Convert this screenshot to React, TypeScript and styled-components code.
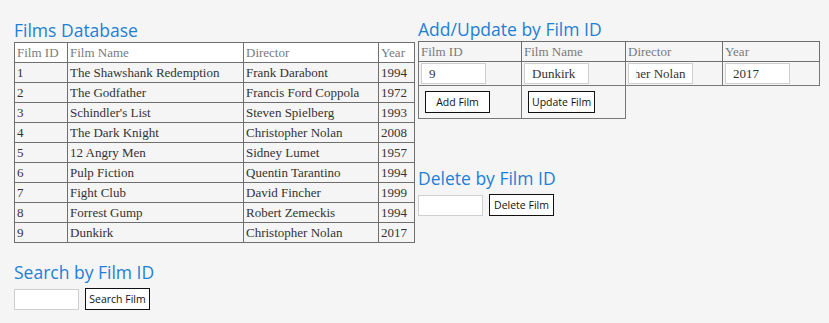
import React, { useEffect, useRef } from "react"
import styled, { createGlobalStyle } from "styled-components"

const Global = createGlobalStyle`
  body {
    margin: 0;
    background: #f5f5f5;
  }
`

const films = [
  { id: 1, name: "The Shawshank Redemption", director: "Frank Darabont", year: 1994 },
  { id: 2, name: "The Godfather", director: "Francis Ford Coppola", year: 1972 },
  { id: 3, name: "Schindler's List", director: "Steven Spielberg", year: 1993 },
  { id: 4, name: "The Dark Knight", director: "Christopher Nolan", year: 2008 },
  { id: 5, name: "12 Angry Men", director: "Sidney Lumet", year: 1957 },
  { id: 6, name: "Pulp Fiction", director: "Quentin Tarantino", year: 1994 },
  { id: 7, name: "Fight Club", director: "David Fincher", year: 1999 },
  { id: 8, name: "Forrest Gump", director: "Robert Zemeckis", year: 1994 },
  { id: 9, name: "Dunkirk", director: "Christopher Nolan", year: 2017 },
]

const S = {
  Page: styled.div`
    display: flex;
    gap: 4px;
    padding: 18px 0 0 14px;
  `,
  Column: styled.div`
    display: flex;
    flex-direction: column;
    width: 400px;
  `,
  Heading: styled.h2<{ $top?: number }>`
    margin: ${(p) => p.$top ?? 0}px 0 0 0;
    font-family: "Open Sans", "Noto Sans", sans-serif;
    font-weight: 400;
    font-size: 17.5px;
    line-height: 24px;
    color: #1e7fd6;
  `,
  Table: styled.table`
    border-collapse: collapse;
    font-family: "Liberation Serif", serif;
    font-size: 13px;
    line-height: 15px;
    color: #333;
    table-layout: fixed;
  `,
  Th: styled.th<{ $white?: boolean }>`
    text-align: left;
    font-weight: 400;
    color: #7a7a7a;
    background: ${(p) => (p.$white ? "#fff" : "transparent")};
    border: 1px solid #6f6f6f;
    padding: 2px 2px;
  `,
  Td: styled.td`
    border: 1px solid #6f6f6f;
    padding: 2px 2px;
    white-space: nowrap;
    overflow: hidden;
  `,
  FormTd: styled.td`
    border: 1px solid #777;
    padding: 1px 2px;
    vertical-align: top;
  `,
  Input: styled.input`
    box-sizing: border-box;
    width: 65px;
    height: 21px;
    border: 1px solid #cfcfcf;
    background: #fff;
    padding: 0 7px;
    font-family: "Liberation Serif", serif;
    font-size: 13px;
    color: #333;
    outline: none;
  `,
  Button: styled.button`
    box-sizing: border-box;
    min-width: 65px;
    height: 22px;
    padding: 0 3px;
    border: 1px solid #111;
    background: #fff;
    font-family: "Open Sans", "Noto Sans", sans-serif;
    font-size: 10.5px;
    color: #111;
  `,
  CellButton: styled.div`
    padding: 4px 2px 4px 4px;
  `,
  InlineForm: styled.div`
    display: flex;
    align-items: center;
    gap: 6px;
    margin-top: 4px;
  `,
}

const ScrolledInput: React.FC<{ value: string }> = ({ value }) => {
  const ref = useRef<HTMLInputElement>(null)
  useEffect(() => {
    if (ref.current) ref.current.scrollLeft = ref.current.scrollWidth
  }, [])
  return <S.Input ref={ref} defaultValue={value} />
}

const App: React.FC = () => {
  return (
    <>
      <Global />
      <S.Page>
        <S.Column>
          <S.Heading>Films Database</S.Heading>
          <S.Table style={{ width: 400 }}>
            <colgroup>
              <col style={{ width: 53 }} />
              <col style={{ width: 176 }} />
              <col style={{ width: 135 }} />
              <col style={{ width: 36 }} />
            </colgroup>
            <thead>
              <tr>
                <S.Th $white>Film ID</S.Th>
                <S.Th $white>Film Name</S.Th>
                <S.Th $white>Director</S.Th>
                <S.Th $white>Year</S.Th>
              </tr>
            </thead>
            <tbody>
              {films.map((f) => (
                <tr key={f.id}>
                  <S.Td>{f.id}</S.Td>
                  <S.Td>{f.name}</S.Td>
                  <S.Td>{f.director}</S.Td>
                  <S.Td>{f.year}</S.Td>
                </tr>
              ))}
            </tbody>
          </S.Table>
          <S.Heading $top={17}>Search by Film ID</S.Heading>
          <S.InlineForm>
            <S.Input />
            <S.Button>Search Film</S.Button>
          </S.InlineForm>
        </S.Column>
        <S.Column>
          <S.Heading $top={-1}>Add/Update by Film ID</S.Heading>
          <S.Table style={{ width: 401 }}>
            <colgroup>
              <col style={{ width: 103 }} />
              <col style={{ width: 104 }} />
              <col style={{ width: 97 }} />
              <col style={{ width: 97 }} />
            </colgroup>
            <thead>
              <tr>
                <S.Th>Film ID</S.Th>
                <S.Th>Film Name</S.Th>
                <S.Th>Director</S.Th>
                <S.Th>Year</S.Th>
              </tr>
            </thead>
            <tbody>
              <tr>
                <S.FormTd>
                  <S.Input defaultValue="9" />
                </S.FormTd>
                <S.FormTd>
                  <S.Input defaultValue="Dunkirk" />
                </S.FormTd>
                <S.FormTd>
                  <ScrolledInput value="Christopher Nolan" />
                </S.FormTd>
                <S.FormTd>
                  <S.Input defaultValue="2017" />
                </S.FormTd>
              </tr>
              <tr>
                <S.FormTd>
                  <S.CellButton>
                    <S.Button>Add Film</S.Button>
                  </S.CellButton>
                </S.FormTd>
                <S.FormTd>
                  <S.CellButton>
                    <S.Button>Update Film</S.Button>
                  </S.CellButton>
                </S.FormTd>
              </tr>
            </tbody>
          </S.Table>
          <S.Heading $top={47}>Delete by Film ID</S.Heading>
          <S.InlineForm>
            <S.Input />
            <S.Button>Delete Film</S.Button>
          </S.InlineForm>
        </S.Column>
      </S.Page>
    </>
  )
}

export default App
